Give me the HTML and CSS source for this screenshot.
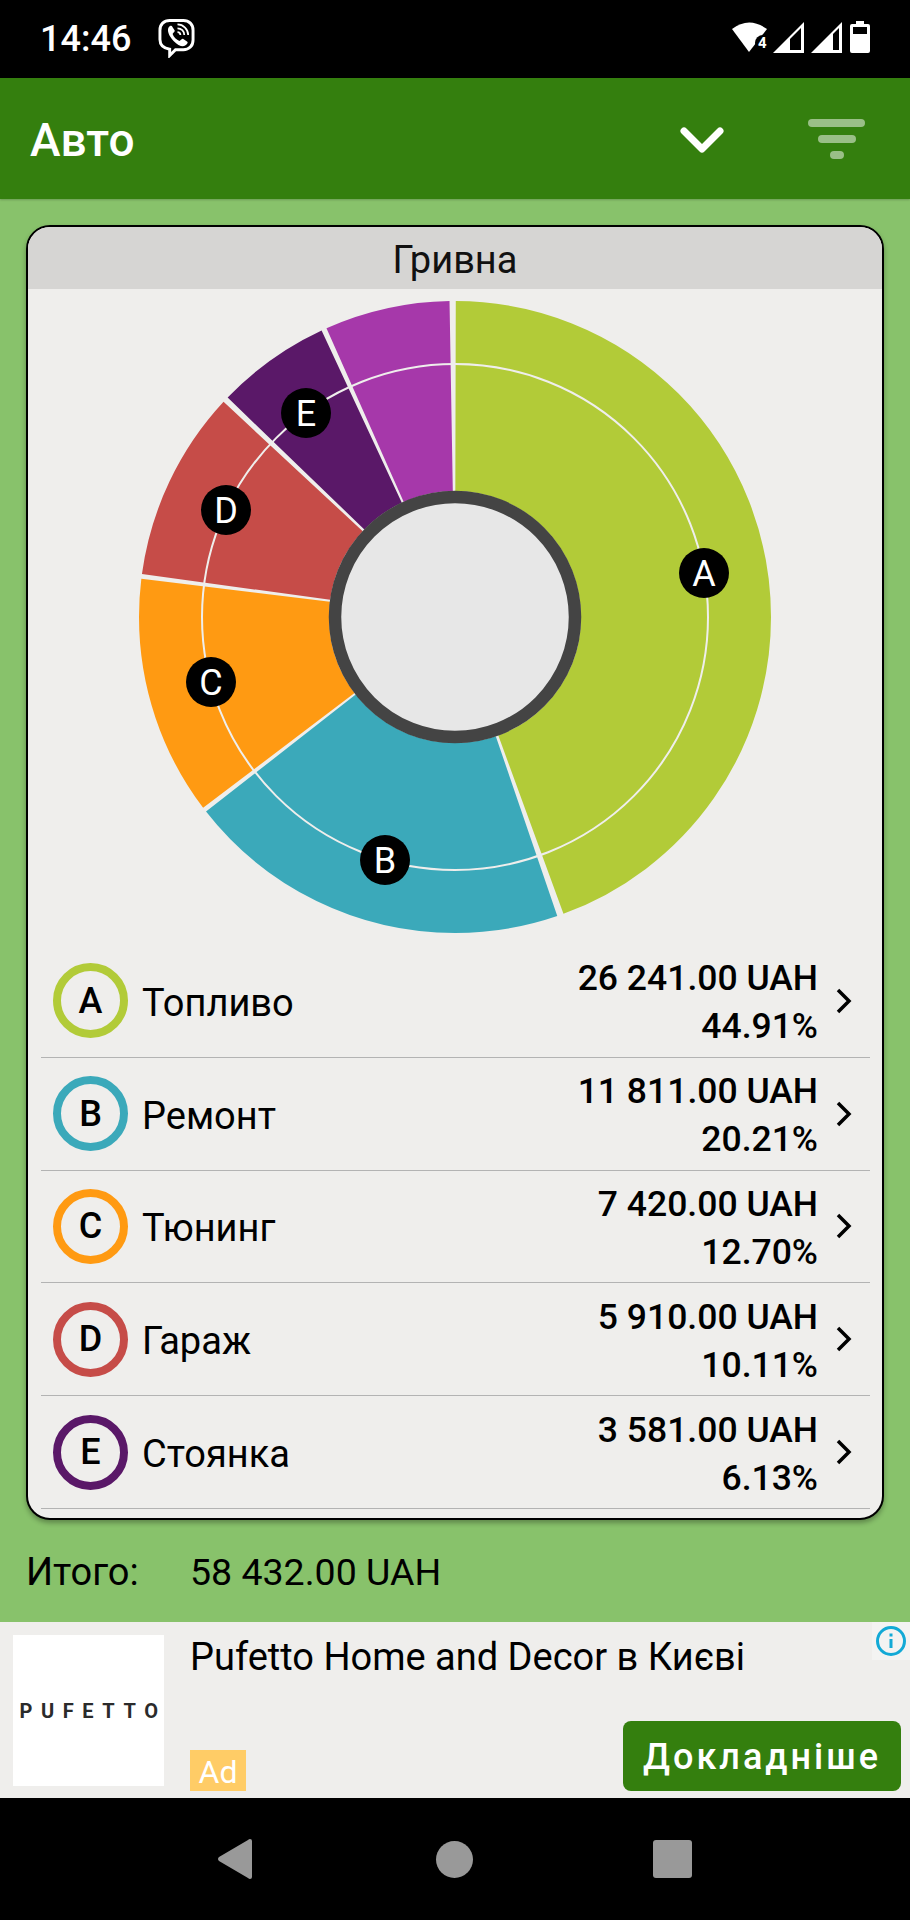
FILE: index.html
```html
<!DOCTYPE html>
<html lang="en">
<head>
    <meta charset="UTF-8">
    <title>Авто</title>
    <link rel="stylesheet" href="styles.css">
</head>
<body>
    <div class="status-bar">
        <span class="clock">14:46</span>
        <svg class="viber" width="37" height="40" viewBox="0 0 38 40" fill="none" stroke="white">
            <path d="M12 2h14c6 0 10 4 10 10v10c0 6-4 10-10 10H18l-6 6v-6.500c-6-1-10-4-10-10V12C2 6 6 2 12 2z" stroke-width="3"/>
            <path d="M11 9c2-2 3-2 4 0l2 3c1 1-2 3-2 4 1 3 4 6 7 7 1 0 3-3 4-2l3 2c2 1 2 2 0 4-3 3-8 1-13-4-5-5-7-11-5-14z" fill="white" stroke="none"/>
            <path d="M20 6c6 0 11 5 11 11M20 10c4 0 7 3 7 7M20 14c2 0 3 1 3 3" stroke-width="1.800"/>
        </svg>
        <div class="status-icons">
            <svg width="140" height="36" viewBox="731 21 140 36">
                <!-- wifi with the 4 cut in at its corner -->
                <path d="M732 29Q749 16 767 29L749 52z" fill="white"/>
                <circle cx="763" cy="43" r="8" fill="black"/>
                <text x="758" y="48" class="wifi-num">4</text>
                <!-- signal -->
                <path d="M773 53L804 22V53z" fill="white"/>
                <path d="M790 50V39L801 28V50z" fill="black"/>
                <path d="M811 53L842 22V53z" fill="white"/>
                <path d="M833 50V34L839 28V50z" fill="black"/>
                <!-- battery -->
                <path d="M850 26q0-2 2-2h4v-3h8v3h4q2 0 2 2v25q0 2-2 2h-16q-2 0-2-2z" fill="white"/>
                <rect x="853" y="27" width="14" height="7" fill="black"/>
            </svg>
        </div>
    </div>

    <div class="app-bar">
        <h1>Авто</h1>
        <svg class="chevron-down" width="44" height="26" viewBox="0 0 44 26" fill="none" stroke="white" stroke-width="7" stroke-linecap="round" stroke-linejoin="round">
            <path d="M4 4l18 18L40 4"/>
        </svg>
        <div class="filter-icon">
            <span class="filter-a"></span>
            <span class="filter-b"></span>
            <span class="filter-c"></span>
        </div>
    </div>

    <div class="main">
        <div class="card">
            <div class="card-title">Гривна</div>
            <svg class="chart" width="854" height="656" viewBox="28 289 854 656">
                <!-- slices: percent of the circle, small gap at the end of each -->
                <g fill="none" stroke-width="190" transform="rotate(-90 455 617)">
                    <circle class="slice" cx="455" cy="617" r="221" pathLength="100" stroke="#b2cb38" stroke-dasharray="44.38 55.62" stroke-dashoffset="-0.04"/>
                    <circle class="slice" cx="455" cy="617" r="221" pathLength="100" stroke="#3ba9ba" stroke-dasharray="19.69 80.31" stroke-dashoffset="-44.75"/>
                    <circle class="slice" cx="455" cy="617" r="221" pathLength="100" stroke="#ff9a12" stroke-dasharray="12.26 87.74" stroke-dashoffset="-64.68"/>
                    <circle class="slice" cx="455" cy="617" r="221" pathLength="100" stroke="#c64c48" stroke-dasharray="9.74 90.26" stroke-dashoffset="-77.18"/>
                    <circle class="slice" cx="455" cy="617" r="221" pathLength="100" stroke="#5a1868" stroke-dasharray="5.84 94.16" stroke-dashoffset="-87.22"/>
                    <circle class="slice" cx="455" cy="617" r="221" pathLength="100" stroke="#a638aa" stroke-dasharray="6.39 93.61" stroke-dashoffset="-93.33"/>
                </g>
                <circle cx="455" cy="617" r="253" fill="none" stroke="#efeeec" stroke-width="2"/>
                <circle cx="455" cy="617" r="120" fill="#e7e7e7" stroke="#444444" stroke-width="12.500"/>
                <g class="badges">
                    <circle cx="704" cy="573" r="25"/><text x="704" y="586">A</text>
                    <circle cx="385" cy="860" r="25"/><text x="385" y="873">B</text>
                    <circle cx="211" cy="682" r="25"/><text x="211" y="695">C</text>
                    <circle cx="226" cy="510" r="25"/><text x="226" y="523">D</text>
                    <circle cx="306" cy="413" r="25"/><text x="306" y="426">E</text>
                </g>
            </svg>
            <div class="rows">
                <div class="row">
                    <div class="letter letter-a">A</div>
                    <div class="name">Топливо</div>
                    <div class="amount">26 241.00 UAH<br>44.91%</div>
                    <svg class="chevron" width="16" height="26" viewBox="0 0 16 26" fill="none" stroke="black" stroke-width="3.500"><path d="M2 2l11 11L2 24"/></svg>
                </div>
                <div class="row">
                    <div class="letter letter-b">B</div>
                    <div class="name">Ремонт</div>
                    <div class="amount">11 811.00 UAH<br>20.21%</div>
                    <svg class="chevron" width="16" height="26" viewBox="0 0 16 26" fill="none" stroke="black" stroke-width="3.500"><path d="M2 2l11 11L2 24"/></svg>
                </div>
                <div class="row">
                    <div class="letter letter-c">C</div>
                    <div class="name">Тюнинг</div>
                    <div class="amount">7 420.00 UAH<br>12.70%</div>
                    <svg class="chevron" width="16" height="26" viewBox="0 0 16 26" fill="none" stroke="black" stroke-width="3.500"><path d="M2 2l11 11L2 24"/></svg>
                </div>
                <div class="row">
                    <div class="letter letter-d">D</div>
                    <div class="name">Гараж</div>
                    <div class="amount">5 910.00 UAH<br>10.11%</div>
                    <svg class="chevron" width="16" height="26" viewBox="0 0 16 26" fill="none" stroke="black" stroke-width="3.500"><path d="M2 2l11 11L2 24"/></svg>
                </div>
                <div class="row">
                    <div class="letter letter-e">E</div>
                    <div class="name">Стоянка</div>
                    <div class="amount">3 581.00 UAH<br>6.13%</div>
                    <svg class="chevron" width="16" height="26" viewBox="0 0 16 26" fill="none" stroke="black" stroke-width="3.500"><path d="M2 2l11 11L2 24"/></svg>
                </div>
            </div>
        </div>
        <div class="total">
            <span class="total-label">Итого:</span>
            <span class="total-value">58 432.00 UAH</span>
        </div>
    </div>

    <div class="ad">
        <div class="ad-logo">PUFETTO</div>
        <div class="ad-body">
            <div class="ad-title">Pufetto Home and Decor в Києві</div>
            <div class="ad-bottom">
                <span class="ad-tag">Ad</span>
                <span class="ad-button">Докладніше</span>
            </div>
        </div>
        <div class="ad-info">
            <svg width="30" height="30" viewBox="0 0 30 30" fill="none" stroke="#12a9d6" stroke-width="3">
                <circle cx="15" cy="15" r="13.500"/>
                <path d="M15 13v9M15 7.500v3"/>
            </svg>
        </div>
    </div>

    <div class="nav-bar">
        <svg width="36" height="42" viewBox="0 0 36 42" fill="#999999"><path d="M33 1q2 0 2 2v36q0 2-2 2-1 0-2-1L2 23q-2-2 0-4L31 2q1-1 2-1z"/></svg>
        <div class="nav-circle"></div>
        <div class="nav-square"></div>
    </div>
</body>
</html>
```

FILE: styles.css
```css
* {
    box-sizing: border-box;
}

body {
    margin: 0;
    width: 910px;
    height: 1920px;
    display: flex;
    flex-direction: column;
    overflow: hidden;
    font-family: Roboto, "Noto Sans", sans-serif;
    color: #000;
    background: #000;
}

/* status bar */
.status-bar {
    height: 78px;
    background: #000;
    color: #fff;
    display: flex;
    align-items: center;
    padding: 0 39px 0 40px;
}

.clock {
    font-size: 36px;
    font-weight: 500;
    margin-right: 27px;
}

.viber {
    margin-top: -2px;
}

.status-icons {
    margin-left: auto;
    display: flex;
}

.wifi-num {
    font-size: 15px;
    font-weight: 700;
    fill: #fff;
}

/* top bar */
.app-bar {
    height: 121px;
    background: #347f0e;
    display: flex;
    align-items: center;
    padding-left: 30px;
    box-shadow: 0 1px 2px rgba(0, 0, 0, 0.2);
    position: relative;
}

.app-bar h1 {
    margin: 0;
    flex: 1;
    font-size: 46px;
    font-weight: 500;
    color: #fff;
    padding-top: 3px;
}

.chevron-down {
    margin-right: 84px;
    margin-top: 2px;
}

.filter-icon {
    width: 57px;
    margin-right: 45px;
    display: flex;
    flex-direction: column;
    align-items: center;
    gap: 8px;
}

.filter-icon span {
    display: block;
    height: 8px;
    border-radius: 4px;
    background: rgba(255, 255, 255, 0.5);
}

.filter-a {
    width: 57px;
}

.filter-b {
    width: 38px;
}

.filter-c {
    width: 14px;
}

/* main area */
.main {
    flex: 1;
    background: #88c26b;
    padding: 26px 26px 0;
}

.card {
    height: 1295px;
    background: #efeeec;
    border: 2px solid #000;
    border-radius: 24px;
    overflow: hidden;
    box-shadow: 0 3px 5px rgba(0, 0, 0, 0.3);
}

.card-title {
    height: 62px;
    line-height: 66px;
    background: #d6d5d3;
    text-align: center;
    font-size: 38px;
    color: #111;
}

.chart {
    display: block;
}

.badges circle {
    fill: #000;
}

.badges text {
    fill: #fff;
    font-size: 36px;
    text-anchor: middle;
}

.rows {
    margin: 0 12px 0 13px;
}

.row {
    height: 112.8px;
    display: flex;
    align-items: center;
    padding-left: 12px;
    border-bottom: 1.5px solid #b3b3b3;
}

.letter {
    width: 75px;
    height: 75px;
    border-radius: 50%;
    border: 8.5px solid #000;
    display: flex;
    align-items: center;
    justify-content: center;
    font-size: 36px;
    font-weight: 500;
}

.letter-a { border-color: #b2cb38; }
.letter-b { border-color: #3ba9ba; }
.letter-c { border-color: #ff9a12; }
.letter-d { border-color: #c64c48; }
.letter-e { border-color: #5a1868; }

.name {
    flex: 1;
    margin-left: 14px;
    font-size: 38px;
    padding-top: 4px;
}

.amount {
    text-align: right;
    font-size: 35.5px;
    font-weight: 500;
    line-height: 48px;
    padding-top: 3px;
}

.chevron {
    margin: 0 18px 0 18px;
    flex-shrink: 0;
}

.total {
    display: flex;
    padding-top: 30px;
    font-size: 38px;
    line-height: 44px;
}

.total-label {
    width: 164px;
}

.total-value {
    font-size: 37.5px;
}

/* ad */
.ad {
    height: 176px;
    background: #efeeec;
    display: flex;
    padding: 13px 9px 7px 13px;
    position: relative;
}

.ad-logo {
    width: 151px;
    height: 151px;
    background: #fff;
    display: flex;
    align-items: center;
    justify-content: center;
    padding-left: 9px;
    font-size: 20px;
    font-weight: 700;
    letter-spacing: 8.6px;
    color: #2b2b2b;
}

.ad-body {
    flex: 1;
    margin-left: 26px;
    display: flex;
    flex-direction: column;
    justify-content: space-between;
}

.ad-title {
    font-size: 38px;
    line-height: 44px;
}

.ad-bottom {
    display: flex;
    align-items: flex-end;
    justify-content: space-between;
}

.ad-tag {
    width: 56px;
    height: 41px;
    background: #ffcc66;
    color: #fff;
    font-size: 32px;
    line-height: 44px;
    text-align: center;
}

.ad-button {
    width: 278px;
    height: 70px;
    border-radius: 8px;
    background: #347f0e;
    color: #fff;
    font-size: 36px;
    font-weight: 500;
    letter-spacing: 3px;
    line-height: 72px;
    text-align: center;
}

.ad-info {
    position: absolute;
    top: 0;
    right: 0;
    width: 38px;
    height: 38px;
    background: #f3f3f2;
    display: flex;
    align-items: center;
    justify-content: center;
}

/* bottom nav */
.nav-bar {
    height: 122px;
    background: #000;
    display: flex;
    align-items: center;
    padding-left: 217px;
}

.nav-circle {
    width: 37px;
    height: 37px;
    border-radius: 50%;
    background: #999;
    margin-left: 183px;
}

.nav-square {
    width: 39px;
    height: 38px;
    border-radius: 3px;
    background: #999;
    margin-left: 180px;
}
```
